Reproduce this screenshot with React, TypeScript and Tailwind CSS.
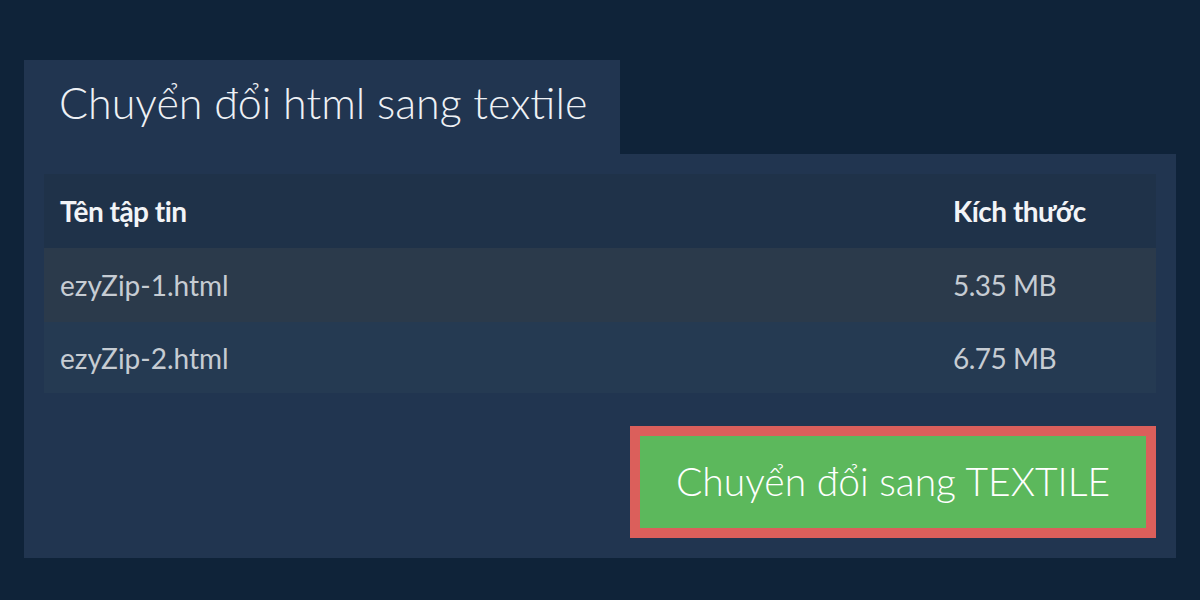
const files = [
  { name: "ezyZip-1.html", size: "5.35 MB" },
  { name: "ezyZip-2.html", size: "6.75 MB" },
];

export default function App() {
  return (
    <div
      className="min-h-[600px] w-full bg-[#0f2339] px-6 pt-[60px] pb-[42px]"
      style={{ fontFamily: "Lato, 'Noto Sans', sans-serif" }}
    >
      <div className="w-[596px] h-[94px] bg-[#213550] pl-[35px] flex items-center pb-[10px]">
        <h1 className="text-[43px] font-light text-[#eef1f5] leading-none">
          Chuyển đổi html sang textile
        </h1>
      </div>

      <div className="bg-[#213550] px-5 pt-5 pb-5">
        <table className="w-full border-collapse text-left">
          <thead>
            <tr className="bg-[#1f3249] h-[74px]">
              <th className="pl-4 text-[28px] font-bold text-[#f2f4f7] tracking-[-0.5px]">Tên tập tin</th>
              <th className="w-[203px] text-[28px] font-bold text-[#f2f4f7] tracking-[-0.5px]">Kích thước</th>
            </tr>
          </thead>
          <tbody>
            {files.map((f, i) => (
              <tr
                key={f.name}
                className={i === 0 ? "bg-[#2b3a4b] h-[74px]" : "bg-[#253a52] h-[71px]"}
              >
                <td className="pl-4 text-[28px] text-[#c6ccd3]">{f.name}</td>
                <td className="text-[28px] text-[#c6ccd3] tracking-[-0.5px]">{f.size}</td>
              </tr>
            ))}
          </tbody>
        </table>

        <div className="flex justify-end mt-[33px]">
          <button className="w-[526px] h-[112px] bg-[#5cb85c] border-[10px] border-[#db5f5b] text-white text-[39px] font-light leading-none pb-[2px]">
            Chuyển đổi sang TEXTILE
          </button>
        </div>
      </div>
    </div>
  );
}
